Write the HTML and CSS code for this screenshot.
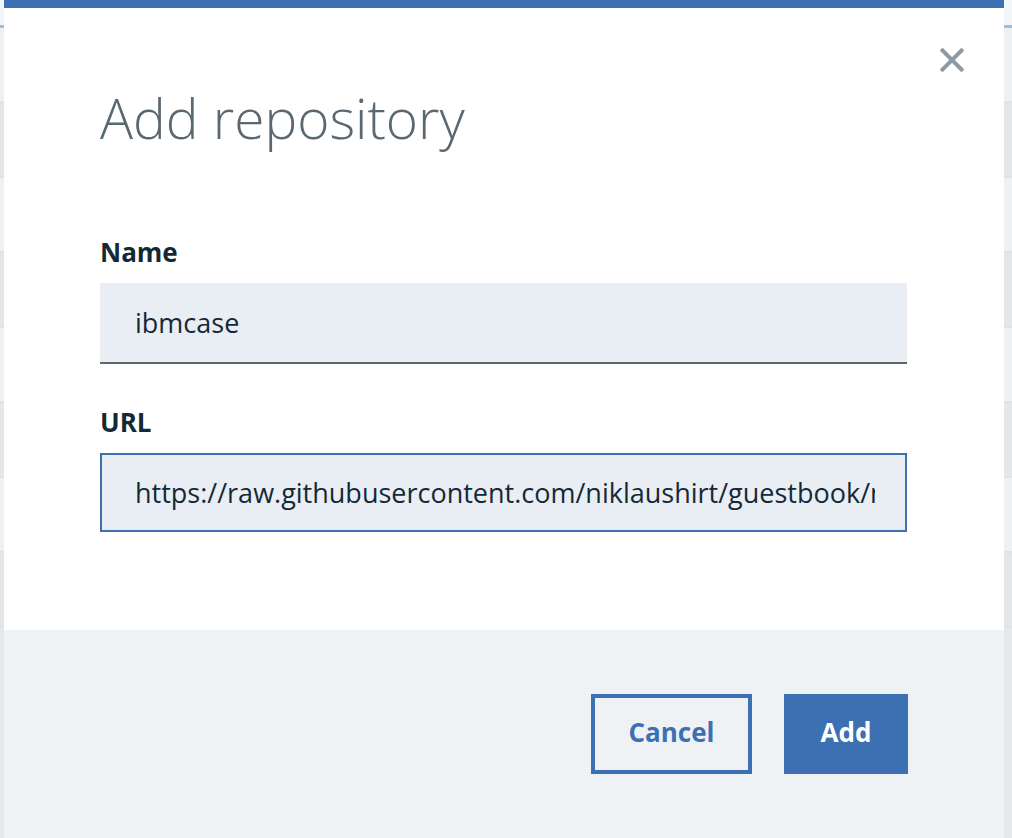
FILE: index.html
```html
<!DOCTYPE html>
<html lang="en">
<head>
<meta charset="utf-8">
<title>Add repository</title>
<link rel="stylesheet" href="styles.css">
</head>
<body>
<div class="page">
  <div class="page-head"></div>
  <div class="page-tabline"></div>
  <div class="page-row"></div>
  <div class="page-row alt"></div>
  <div class="page-row"></div>
  <div class="page-row alt"></div>
  <div class="page-row"></div>
  <div class="page-row alt"></div>
  <div class="page-row"></div>
  <div class="page-row alt"></div>
</div>

<div class="modal" role="dialog" aria-labelledby="modal-title">
  <div class="modal-body">
    <button class="close" aria-label="Close">
      <svg width="24" height="24" viewBox="0 0 24 24" aria-hidden="true">
        <path d="M2.5 2.5 L21.5 21.5 M21.5 2.5 L2.5 21.5" stroke="#8c9ba5" stroke-width="4" stroke-linecap="square" fill="none"/>
      </svg>
    </button>
    <h1 id="modal-title" class="title">Add repository</h1>
    <div class="field">
      <label class="label" for="repo-name">Name</label>
      <input id="repo-name" class="input input-name" type="text" value="ibmcase">
    </div>
    <div class="field">
      <label class="label" for="repo-url">URL</label>
      <input id="repo-url" class="input input-url" type="text" value="https://raw.githubusercontent.com/niklaushirt/guestbook/master/">
    </div>
  </div>
  <div class="modal-footer">
    <button class="btn btn-secondary">Cancel</button>
    <button class="btn btn-primary">Add</button>
  </div>
</div>
</body>
</html>
```
FILE: styles.css
```css
* { box-sizing: border-box; }
html, body {
  margin: 0;
  height: 100%;
}
body {
  background: #e6e9ec;
  font-family: "Open Sans", "Noto Sans", sans-serif;
  color: #152935;
  overflow: hidden;
  position: relative;
}
.page {
  display: flex;
  flex-direction: column;
}
.page-head {
  height: 25px;
  background: #f4f5f6;
}
.page-tabline {
  height: 3px;
  background: #9fbbe0;
}
.page-row {
  height: 75px;
  background: #eef0f2;
  border-bottom: 2px solid #dfe3e6;
}
.page-row.alt {
  background: #e4e7ea;
}

.modal {
  position: absolute;
  top: 0;
  left: 4px;
  width: 1000px;
  height: 860px;
  display: flex;
  flex-direction: column;
  background: #fff;
  border-top: 8px solid #3d70b2;
}
.modal-body {
  position: relative;
  height: 622px;
  padding: 78px 96px 0 96px;
  background: #fff;
}
.close {
  position: absolute;
  top: 40px;
  right: 40px;
  width: 24px;
  height: 24px;
  padding: 0;
  border: 0;
  background: none;
  display: flex;
}
.title {
  margin: 0 0 86px 0;
  font-weight: 300;
  font-size: 55px;
  line-height: 64px;
  color: #5a6872;
}
.field {
  display: flex;
  flex-direction: column;
  margin-bottom: 42px;
}
.label {
  font-weight: 700;
  font-size: 26px;
  line-height: 32px;
  margin-bottom: 15px;
  color: #152935;
}
.input {
  width: 807px;
  height: 81px;
  margin: 0;
  background: #e9eef5;
  font-family: "Open Sans", "Noto Sans", sans-serif;
  font-size: 27px;
  color: #152935;
  padding: 0 30px 0 35px;
  border: 0;
  border-radius: 0;
  outline: none;
}
.input-name {
  border-bottom: 2px solid #5a6872;
}
.input-url {
  height: 79px;
  border: 2px solid #3d70b2;
  padding: 0 30px 0 33px;
}
.modal-footer {
  flex: 1;
  background: #eef2f5;
  display: flex;
  justify-content: flex-end;
  align-items: flex-start;
  gap: 32px;
  padding: 64px 96px 0 0;
}
.btn {
  height: 80px;
  font-family: "Open Sans", "Noto Sans", sans-serif;
  font-weight: 700;
  font-size: 26px;
  line-height: 1;
  padding: 0 0 4px 0;
  cursor: pointer;
}
.btn-secondary {
  width: 161px;
  background: transparent;
  border: 4px solid #3d70b2;
  color: #3d70b2;
}
.btn-primary {
  width: 124px;
  background: #3d70b2;
  border: 0;
  color: #fff;
}
```
